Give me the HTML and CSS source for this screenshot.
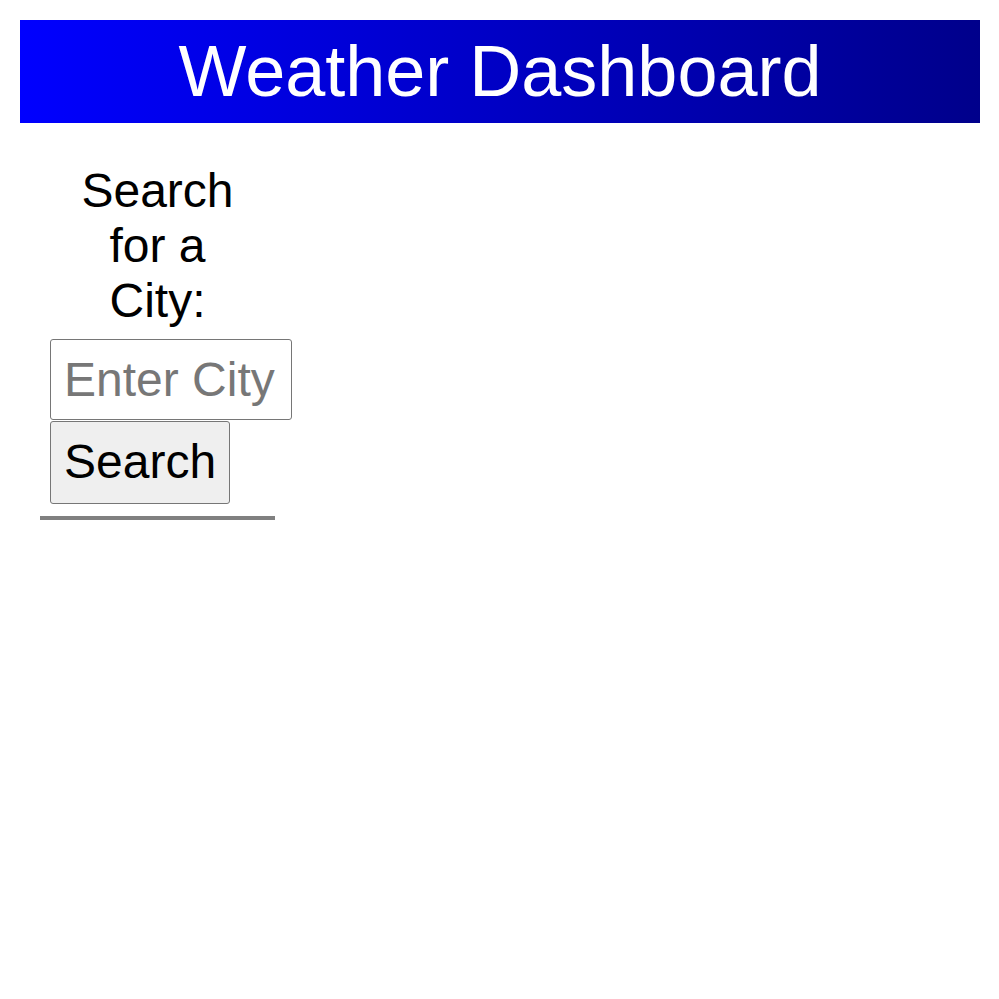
FILE: index.html
```html
<!DOCTYPE html>
<html lang="en">
<head>
<meta charset="utf-8">
<title>Weather Dashboard</title>
<link rel="stylesheet" href="styles.css">
</head>
<body>
<header class="site-header">
  <h1 class="site-title">Weather Dashboard</h1>
</header>
<main class="main">
  <aside class="search-panel">
    <label class="search-label" for="city">Search for a City:</label>
    <input class="city-input" id="city" type="text" placeholder="Enter City">
    <button class="search-btn" type="button">Search</button>
  </aside>
</main>
</body>
</html>
```
FILE: styles.css
```css
* { box-sizing: border-box; }
body {
  margin: 20px 19px 20px 20px;
  font-family: "Liberation Sans", Arial, Helvetica, sans-serif;
  background: #fff;
  color: #000;
}
.site-header {
  background: linear-gradient(to right, #0000ff, #00008b);
  padding: 10px;
  text-align: center;
}
.site-title {
  margin: 0;
  font-size: 72px;
  font-weight: normal;
  color: #fff;
  line-height: 83px;
}
.main {
  padding: 20px 20px 0;
}
.search-panel {
  width: 235px;
  padding: 20px 10px 12px;
  border-bottom: 4px solid #808080;
}
.search-label {
  display: block;
  text-align: center;
  font-size: 48px;
  line-height: 55px;
  padding: 0 20px;
  margin-bottom: 11px;
}
.city-input {
  display: block;
  box-sizing: content-box;
  width: 100%;
  margin: 0;
  padding: 12px 12px 12px 13px;
  font: 48px "Liberation Sans", Arial, sans-serif;
  border: 1px solid #767676;
  border-radius: 3px;
  line-height: normal;
  height: 55px;
}
.city-input::placeholder { color: #777; }
.search-btn {
  display: block;
  margin: 1px 0 0;
  padding: 12px 13px 14px;
  font: 48px "Liberation Sans", Arial, sans-serif;
  line-height: normal;
  background: #efefef;
  border: 1px solid #767676;
  border-radius: 3px;
  color: #000;
}
```
